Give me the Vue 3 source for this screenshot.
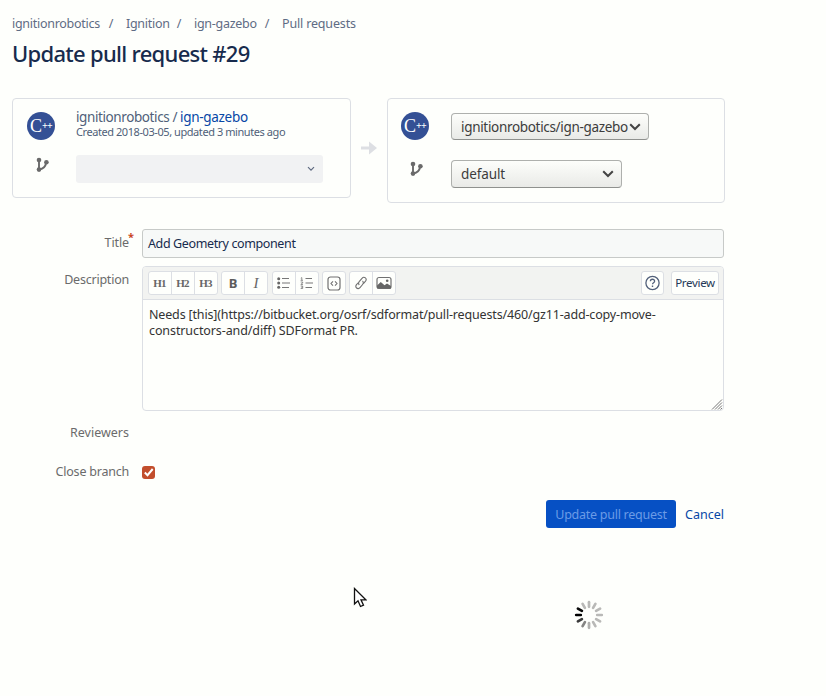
<script setup>
const crumbs = [
  { label: 'ignitionrobotics', cls: 'c1' },
  { label: 'Ignition', cls: 'c2' },
  { label: 'ign-gazebo', cls: 'c3' },
  { label: 'Pull requests', cls: 'c4' },
]
const spokes = [
  '#b9b9b7', '#b9b9b7', '#b9b9b7', '#b9b9b7', '#b9b9b7', '#b9b9b7',
  '#b0b0ae', '#858583', '#3a3a3a', '#000', '#0a0a0a', '#b9b9b7',
]
</script>

<template>
  <main class="page">
    <nav class="crumbs">
      <span v-for="c in crumbs" :key="c.label" class="crumb" :class="c.cls"><a>{{ c.label }}</a></span>
    </nav>
    <h1>Update pull request #29</h1>

    <section class="repos">
      <div class="card source">
        <div class="logo">C<sup>++</sup></div>
        <div class="repo">
          <div class="name"><span class="owner">ignitionrobotics /</span><a class="slug">ign-gazebo</a></div>
          <div class="meta">Created 2018-03-05, updated 3 minutes ago</div>
        </div>
        <svg class="branch" width="14" height="16" viewBox="0 0 14 16">
          <path d="M3 3V13M3.4 12.6C8 11.6 9.6 9.5 10.2 5.5" fill="none" stroke="#6a6a6a" stroke-width="1.9" />
          <circle cx="3" cy="3" r="2.3" fill="#6a6a6a" /><circle cx="3" cy="12.6" r="2.3" fill="#6a6a6a" /><circle cx="10.4" cy="5.300" r="2.3" fill="#6a6a6a" />
        </svg>
        <div class="branch-select">
          <svg width="8" height="6" viewBox="0 0 8 6"><path d="M1 1.2L4 4.2L7 1.2" fill="none" stroke="#5f6b80" stroke-width="1.2" /></svg>
        </div>
      </div>

      <svg class="arrow" width="16" height="14" viewBox="0 0 16 14"><path d="M0 5.5H8V.5L16 7L8 13.500V8.500H0Z" fill="#dddfe3" /></svg>

      <div class="card dest">
        <div class="logo">C<sup>++</sup></div>
        <div class="native wide"><span>ignitionrobotics/ign-gazebo</span>
          <svg width="12" height="8" viewBox="0 0 12 8"><path d="M1.200 1.200L6 6L10.800 1.200" fill="none" stroke="#444" stroke-width="2" /></svg>
        </div>
        <svg class="branch" width="14" height="16" viewBox="0 0 14 16">
          <path d="M3 3V13M3.4 12.6C8 11.6 9.6 9.5 10.2 5.5" fill="none" stroke="#6a6a6a" stroke-width="1.9" />
          <circle cx="3" cy="3" r="2.3" fill="#6a6a6a" /><circle cx="3" cy="12.6" r="2.3" fill="#6a6a6a" /><circle cx="10.4" cy="5.300" r="2.3" fill="#6a6a6a" />
        </svg>
        <div class="native short"><span>default</span>
          <svg width="12" height="8" viewBox="0 0 12 8"><path d="M1.200 1.200L6 6L10.800 1.200" fill="none" stroke="#444" stroke-width="2" /></svg>
        </div>
      </div>
    </section>

    <form class="form">
      <label class="l-title">Title<i class="req">*</i></label>
      <div class="input">Add Geometry component</div>

      <label class="l-desc">Description</label>
      <div class="editor">
        <div class="toolbar">
          <div class="group g1"><b class="h">H1</b><b class="h">H2</b><b class="h">H3</b></div>
          <div class="group g2"><b class="bold">B</b><i class="ital">I</i></div>
          <div class="group g3">
            <span><svg width="14" height="12" viewBox="0 0 14 12" stroke="#777" stroke-width="1.2"><path d="M5 1.500H12M5 6H13M5 10.500H12" /><g fill="#666" stroke="none"><circle cx="1.700" cy="1.700" r="1.500" /><circle cx="1.700" cy="6" r="1.500" /><circle cx="1.700" cy="10.300" r="1.500" /></g></svg></span>
            <span><svg width="14" height="12" viewBox="0 0 14 12" stroke="#777" fill="none"><path d="M5.500 1.500H12M5.500 6H13M5.500 10.500H12" stroke-width="1.200" /><path d="M.8 1.200L1.800.6V3.300M.6 3.300H3M.7 5H2.700V6L.8 7.400H3M.7 9H2.700V11.500H.7M1.200 10.200H2.700" stroke-width=".8" /></svg></span>
          </div>
          <div class="group g4"><span><svg width="14" height="15" viewBox="0 0 14 15" stroke="#707070" fill="none"><rect x="1" y="1" width="12" height="13" rx="2.500" stroke-width="1.200" /><path d="M6 5.300L4 7.500L6 9.700M8 5.300L10 7.500L8 9.700" stroke-width="1.100" /></svg></span></div>
          <div class="group g5">
            <span><svg width="12" height="14" viewBox="0 0 12 14" stroke="#707070" fill="none" stroke-width="1.100" stroke-linecap="round"><path d="M4 8.600C3.200 7.400 3.600 6.300 4.400 5.400L7 2.300C8 1.100 9.400 1.100 10.400 1.900C11.400 2.800 11.400 4 10.500 5.200L8.600 7.500" /><path d="M7.800 5.300C8.600 6.500 8.400 7.600 7.600 8.500L5 11.600C4 12.800 2.600 12.900 1.600 12C.6 11.100.6 9.900 1.500 8.700L3 7" /></svg></span>
            <span><svg width="16" height="14" viewBox="0 0 16 14"><rect x="1" y="1.500" width="14" height="11" rx="2" fill="none" stroke="#707070" stroke-width="1.200" /><path d="M1 12.500V9.500L4.800 6L8.500 9.300L11 7.500L15 10V12.500Z" fill="#666" /><circle cx="11.200" cy="4.700" r="1.300" fill="#666" /></svg></span>
          </div>
          <div class="group help"><svg width="16" height="16" viewBox="0 0 16 16" fill="none" stroke="#52607a"><circle cx="8" cy="8" r="6.600" stroke-width="1.300" /><path d="M5.900 6.300C5.900 3.600 10.100 3.600 10.100 6.200C10.100 7.700 8 7.700 8 9.300" stroke-width="1.300" /><path d="M8 10.600V12" stroke-width="1.400" /></svg></div>
          <div class="group preview">Preview</div>
        </div>
        <div class="text">
          <p class="t1">Needs [this](https://bitbucket.org/osrf/sdformat/pull-requests/460/gz11-add-copy-move-</p>
          <p class="t2">constructors-and/diff) SDFormat PR.</p>
          <svg class="grip" width="12" height="12" viewBox="0 0 12 12"><path d="M1 11.500L11 1.500M4 11.500L11 4.500M7 11.500L11 7.500M9.500 11.500L11 10" stroke="#777" stroke-width="1" /></svg>
        </div>
      </div>

      <label class="l-rev">Reviewers</label><div></div>

      <label class="l-close">Close branch</label>
      <div class="check"><svg width="13" height="13" viewBox="0 0 13 13"><path d="M2.800 6.500L5.500 9.200L10.700 3" fill="none" stroke="#fff" stroke-width="2" /></svg></div>
    </form>

    <div class="actions"><button class="primary" disabled>Update pull request</button><a class="cancel">Cancel</a></div>

    <div class="loading">
      <svg width="30" height="30" viewBox="-15 -15 30 30">
        <line v-for="(c, i) in spokes" :key="i" x1="0" y1="-8.200" x2="0" y2="-12.800" :stroke="c" stroke-width="2.700" stroke-linecap="round" :transform="`rotate(${i * 30})`" />
      </svg>
    </div>

    <svg class="cursor" width="14" height="22" viewBox="0 0 14 22"><path d="M1.500 1.500V17L5 13.800L7.500 19.500L10.500 18.200L8 12.800H12.800Z" fill="#fff" stroke="#111" stroke-width="1.300" /></svg>
  </main>
</template>

<style>
body { background: #fefffc; }
</style>

<style scoped>
* { box-sizing: border-box; }
.page {
  position: relative;
  width: 826px;
  height: 696px;
  padding: 14px 12px 0;
  overflow: hidden;
  background: #fefffc;
  color: #505f79;
  font-family: "Noto Sans", "Open Sans", sans-serif;
  font-size: 12.5px;
  white-space: nowrap;
}
.crumbs { display: flex; height: 20px; line-height: 19px; font-size: 12.5px; letter-spacing: -.28px; color: #5e6c84; }
.crumb { display: flex; justify-content: space-between; }
.crumb:not(:last-child)::after { content: "/"; margin-right: 13px; }
.c1 { width: 114px; }
.c2 { width: 68px; }
.c3 { width: 88px; }
.c4 { letter-spacing: -.16px; }
h1 { margin: 3px 0 0; height: 32px; line-height: 32px; font-size: 22px; font-weight: 500; letter-spacing: -.7px; color: #172b4d; }

.repos { display: flex; align-items: flex-start; margin-top: 29px; height: 105px; }
.card { display: grid; align-items: start; align-content: start; border: 1px solid #dcdfe4; border-radius: 4px; }
.source { width: 339px; height: 100px; grid-template: 43px 40px / 49px 247px; padding: 13px 0 0 14px; }
.dest { width: 338px; height: 105px; grid-template: 47px 40px / 50px 200px; padding: 13px 0 0 13px; }
.logo { width: 28px; height: 28px; border-radius: 50%; background: #345095; color: #fff; font: 18px/29px "Liberation Serif", serif; padding-left: 3px; display: flex; }
.logo sup { font-size: 10px; line-height: 28px; letter-spacing: -.8px; vertical-align: baseline; font-weight: bold; }
.name { display: flex; height: 16px; line-height: 16px; margin-top: -3px; font-size: 13.500px; letter-spacing: -.4px; }
.owner { width: 104px; }
.slug { color: #0747a6; letter-spacing: -.3px; }
.meta { height: 15px; line-height: 14px; font-size: 11px; letter-spacing: -.43px; }
.branch { margin: 2px 0 0 9px; }
.branch-select { width: 247px; height: 28px; border-radius: 3px; background: #f1f2f3; display: flex; align-items: center; justify-content: flex-end; padding-right: 8px; }
.arrow { margin: 43px 10px 0; flex: none; }
.native { display: flex; align-items: center; justify-content: space-between; height: 28px; padding: 0 7px 0 9px; border: 1px solid #aeb0ad; border-bottom-color: #8f918e; border-radius: 4px; background: linear-gradient(#fdfefb, #e9eae7); color: #3c3c3c; font-size: 13.500px; letter-spacing: -.32px; }
.native svg { flex: none; }
.native span { padding-top: 1px; }
.wide { width: 198px; margin-top: 1px; height: 27px; }
.short { width: 171px; margin-top: 1px; letter-spacing: -.1px; }
.short span { padding-top: 0; }

.form { display: grid; grid-template-columns: 117px 582px; column-gap: 13px; margin-top: 26px; color: #6b6b6b; }
.form label { text-align: right; line-height: 18px; letter-spacing: -.22px; }
.form .l-title { position: relative; padding-top: 5px; letter-spacing: -.1px; }
.form .l-rev { padding-top: 13px; letter-spacing: 0; }
.req { position: absolute; left: 116px; top: -1px; font-style: normal; color: #c9441f; font-size: 11px; font-weight: bold; line-height: 18px; }
.input { height: 29px; border: 1px solid #c7cac8; border-radius: 3px; background: #f7f9f8; padding-left: 5px; line-height: 27px; color: #172b4d; letter-spacing: -.38px; }
.l-desc { padding-top: 13px; }
.editor { margin-top: 8px; height: 145px; border: 1px solid #dcdfe4; border-radius: 4px; overflow: hidden; }
.toolbar { display: flex; height: 33px; padding: 4px 4px 0 5px; background: #f2f3f1; border-bottom: 1px solid #dcdfe4; }
.group { display: flex; height: 24px; border: 1px solid #dcdfe4; border-radius: 3px; background: #fefffc; margin-right: 3px; color: #666; }
.group > * { flex: 1; display: flex; align-items: center; justify-content: center; }
.group > * + * { border-left: 1px solid #dcdfe4; }
.g1 { width: 70px; }
.g2 { width: 47px; margin-right: 4px; }
.g3 { width: 47px; }
.g4 { width: 24px; }
.g5 { width: 47px; }
.h { font: bold 11px "Liberation Serif", serif; letter-spacing: -.8px; padding-right: 1px; }
.bold { font: bold 13px "Noto Sans", sans-serif; color: #5c5c5c; }
.ital { font: italic 15px "Liberation Serif", serif; }
.help { width: 23px; margin: 0 7px 0 auto; align-items: center; }
.preview { width: 48px; margin-right: 0; align-items: center; justify-content: center; color: #253858; font-size: 11.500px; line-height: 22px; padding-bottom: 1px; letter-spacing: -.3px; }
.text { position: relative; height: 110px; padding: 7px 6px; line-height: 16px; color: #333; }
.text p { margin: 0; }
.t1 { letter-spacing: -.16px; }
.t2 { letter-spacing: -.1px; }
.grip { position: absolute; right: 0; bottom: 0; }
.l-close { padding-top: 21px; }
.check { margin: 24px 0 1px; width: 13px; height: 13px; border-radius: 3px; background: #c24e2c; }
.check svg { display: block; }

.actions { display: flex; margin: 19px 0 0 534px; height: 28px; line-height: 29px; }
.primary { width: 130px; height: 28px; padding: 0; border: 0; border-radius: 3px; background: #0650c4; color: #6b9be6; font: inherit; letter-spacing: -.26px; }
.cancel { margin-left: 9px; color: #0747a6; }
.loading { margin: 72px 0 0 562px; height: 30px; }
.loading svg { display: block; }
.cursor { position: absolute; left: 353px; top: 587px; }
</style>
